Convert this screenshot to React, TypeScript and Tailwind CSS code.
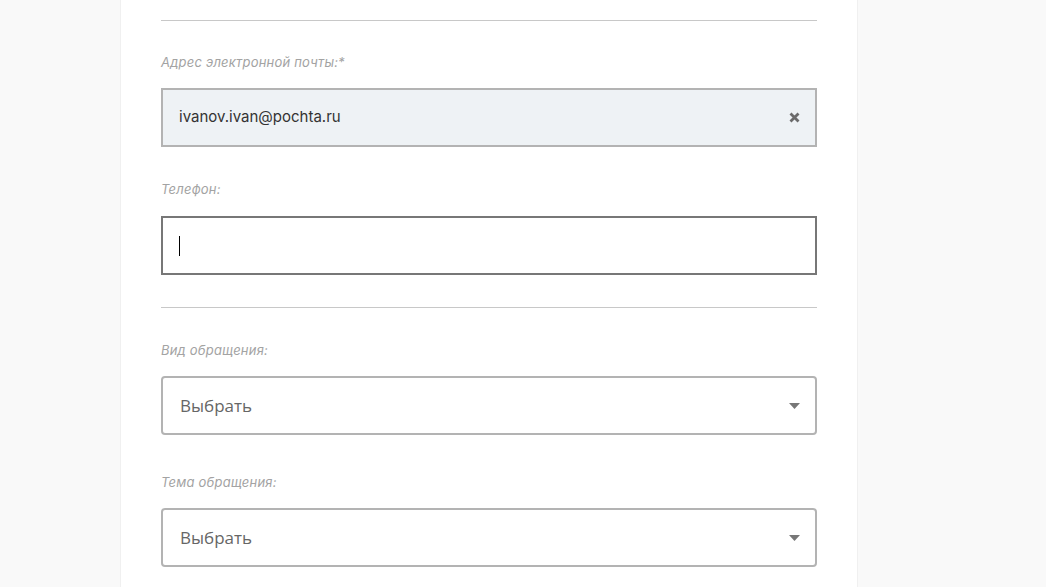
import React from 'react';

const labelCls =
  "block text-[13px] leading-[16px] italic text-[#a3a3a3] tracking-[0.2px] font-['Inter','Noto_Sans',sans-serif]";

function Caret() {
  return (
    <svg width="11" height="6" viewBox="0 0 11 6" className="shrink-0">
      <path d="M0 0 L11 0 L5.5 6 Z" fill="#777" />
    </svg>
  );
}

function ClearIcon() {
  return (
    <svg width="11" height="11" viewBox="0 0 11 11" className="shrink-0">
      <path d="M1.5 1.5 L9.5 9.5 M9.5 1.5 L1.5 9.5" stroke="#6b6b6b" strokeWidth="2.8" strokeLinecap="butt" />
    </svg>
  );
}

function SelectBox() {
  return (
    <div className="mt-[18px] h-[59px] border-2 border-[#b3b3b3] rounded-[4px] bg-white flex items-center justify-between pl-[17px] pr-[15px]">
      <span className="text-[17px] text-[#666] font-['Open_Sans',sans-serif]">Выбрать</span>
      <Caret />
    </div>
  );
}

export default function App() {
  return (
    <div className="min-h-[587px] bg-[#f9f9f9] flex">
      <div className="ml-[120px] w-[738px] bg-white border-l border-r border-[#f0f0f0] px-[40px] pt-[20px] pb-[40px]">
        <div className="h-px bg-[#c8c8c8]" />

        <label className={`${labelCls} mt-[33px]`}>Адрес электронной почты:*</label>
        <div className="mt-[18px] h-[59px] border-2 border-[#b3b3b3] bg-[#eef2f5] flex items-center justify-between pl-[16px] pr-[15px]">
          <span className="text-[15px] text-[#333] font-['Inter',sans-serif]">ivanov.ivan@pochta.ru</span>
          <ClearIcon />
        </div>

        <label className={`${labelCls} mt-[34px]`}>Телефон:</label>
        <div className="mt-[19px] h-[59px] border-2 border-[#777] bg-white flex items-center pl-[16px]">
          <span className="w-px h-[20px] bg-black" />
        </div>

        <div className="mt-[32px] h-px bg-[#c8c8c8]" />

        <label className={`${labelCls} mt-[34px]`}>Вид обращения:</label>
        <SelectBox />

        <label className={`${labelCls} mt-[39px]`}>Тема обращения:</label>
        <SelectBox />
      </div>
    </div>
  );
}
